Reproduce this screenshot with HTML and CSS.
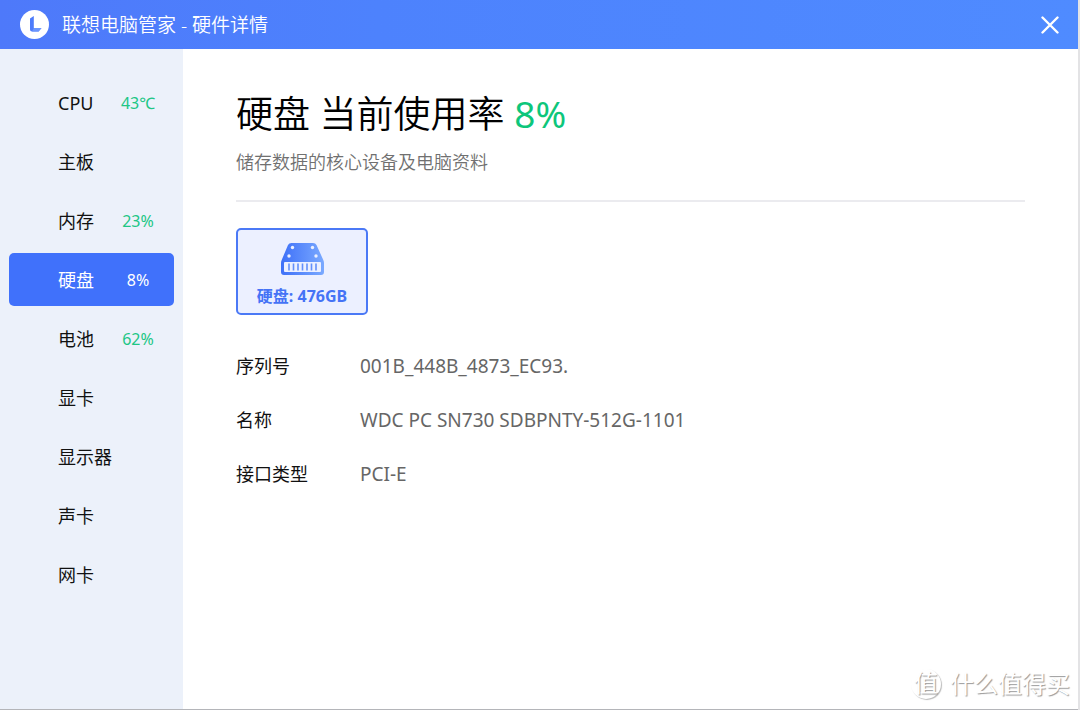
FILE: index.html
```html
<!DOCTYPE html>
<html lang="zh-CN">
<head>
<meta charset="utf-8">
<title>联想电脑管家 - 硬件详情</title>
<link rel="stylesheet" href="styles.css">
</head>
<body>
<div class="window">
  <header class="titlebar">
    <svg class="logo" viewBox="0 0 30 30" aria-hidden="true">
      <circle cx="14.5" cy="14.5" r="14.5" fill="#fff"/>
      <path d="M10 8.500 L13.800 6 V18 H21.500 L18.600 21.500 H12 Q10 21.500 10 19.500 Z" fill="#4d7bfb"/>
      <path d="M13.800 18 H21.500 L18.600 21.500 H12 Z" fill="#6c96fd"/>
    </svg>
    <h1 class="app-title">联想电脑管家 - 硬件详情</h1>
    <button class="close" type="button" aria-label="关闭">
      <svg viewBox="0 0 18 18" aria-hidden="true"><path d="M1.5 1.5 L16.5 16.5 M16.5 1.5 L1.5 16.5" stroke="#fff" stroke-width="2.4" stroke-linecap="round"/></svg>
    </button>
  </header>
  <div class="body">
    <nav class="sidebar">
      <a class="item" href="#cpu"><span>CPU</span><span class="usage">43℃</span></a>
      <a class="item" href="#board"><span>主板</span></a>
      <a class="item" href="#memory"><span>内存</span><span class="usage">23%</span></a>
      <a class="item active" href="#disk" aria-current="page"><span>硬盘</span><span class="usage">8%</span></a>
      <a class="item" href="#battery"><span>电池</span><span class="usage">62%</span></a>
      <a class="item" href="#gpu"><span>显卡</span></a>
      <a class="item" href="#display"><span>显示器</span></a>
      <a class="item" href="#sound"><span>声卡</span></a>
      <a class="item" href="#network"><span>网卡</span></a>
    </nav>
    <main class="content">
      <h2 class="heading">硬盘 当前使用率 <span class="rate">8%</span></h2>
      <p class="subtitle">储存数据的核心设备及电脑资料</p>
      <button class="disk" type="button">
        <svg class="disk-icon" viewBox="0 0 43 32" aria-hidden="true">
          <defs><linearGradient id="metal" x1="0" y1="0" x2="1" y2="0"><stop offset="0" stop-color="#3e70f8"/><stop offset="1" stop-color="#7aa9ff"/></linearGradient></defs>
          <path d="M10.5 0 H32 Q34.5 0 35.5 2 L42.3 17 Q43 18.5 43 20 V29 Q43 32 40 32 H3 Q0 32 0 29 V20 Q0 18.5 .7 17 L7 2 Q8 0 10.5 0 Z" fill="url(#metal)"/>
          <rect x="3" y="19" width="37" height="10" rx="1" fill="#ecf0ff"/>
          <g fill="#ecf0ff"><circle cx="11.5" cy="4.5" r="1.7"/><circle cx="31.5" cy="4.5" r="1.7"/><circle cx="8" cy="13" r="1.7"/><circle cx="35" cy="13" r="1.7"/></g>
          <path d="M8 20.5 V27.5 M12.5 20.5 V27.5 M17 20.5 V27.5 M21.5 20.5 V27.5 M26 20.5 V27.5 M30.5 20.5 V27.5 M35 20.5 V27.5" stroke="#6390fb" stroke-width="1.6" fill="none"/>
        </svg>
        <span>硬盘: 476GB</span>
      </button>
      <dl class="details">
        <dt>序列号</dt><dd>001B_448B_4873_EC93.</dd>
        <dt>名称</dt><dd>WDC PC SN730 SDBPNTY-512G-1101</dd>
        <dt>接口类型</dt><dd>PCI-E</dd>
      </dl>
    </main>
  </div>
  <div class="watermark"><span class="seal">值</span><span>什么值得买</span></div>
</div>
</body>
</html>
```
FILE: styles.css
```css
* { box-sizing: border-box; }
body {
  margin: 0;
  background: #e3e3e5;
  color: #111;
  font-family: "Noto Sans", "Noto Sans CJK SC", sans-serif;
  font-size: 18px;
  line-height: 26px;
}
h1, h2, p, dl, dd { margin: 0; font-weight: 400; }
button { border: 0; padding: 0; background: none; font: inherit; cursor: pointer; }
.window {
  position: relative;
  display: flex;
  flex-direction: column;
  min-height: 100vh;
  margin-right: 2px;
  border-bottom: 1px solid #b4b5b9;
  background: #fff;
}
.titlebar {
  display: flex;
  align-items: center;
  height: 49px;
  padding: 0 19px 0 20px;
  background: linear-gradient(90deg, #4e79fa, #4d82fd 35%, #4f8bff);
  color: #fff;
}
.logo { width: 30px; height: 30px; }
.app-title { margin-left: 12px; font-size: 19px; font-weight: 350; }
.close { display: flex; margin-left: auto; }
.close svg { width: 18px; height: 18px; }
.body { display: flex; flex: 1; }
.sidebar {
  display: flex;
  flex-direction: column;
  gap: 6px;
  width: 183px;
  padding: 27px 9px;
  background: #ecf1fa;
}
.item {
  display: grid;
  grid-template-columns: 1fr 72px;
  align-items: center;
  height: 53px;
  padding-left: 49px;
  border-radius: 5px;
  color: #111;
  text-decoration: none;
  white-space: nowrap;
}
.usage { color: #20c685; font-size: 16px; text-align: center; }
.active { background: #4071fb; color: #fff; }
.active .usage { color: #fff; }
.content { flex: 1; padding: 38px 53px 38px; }
.heading { color: #000; font-size: 37px; font-weight: 350; line-height: 54px; }
.rate { color: #0dc67b; font-weight: 400; }
.subtitle {
  padding: 8px 0 25px;
  border-bottom: 2px solid #ebebef;
  color: #707070;
  font-weight: 350;
}
.disk {
  display: flex;
  flex-direction: column;
  align-items: center;
  gap: 9px;
  width: 132px;
  height: 87px;
  margin-top: 26px;
  padding-top: 13px;
  border: 2px solid #4b79f6;
  border-radius: 5px;
  background: #ecf0ff;
  color: #4573f6;
  font-size: 16px;
  font-weight: 700;
  line-height: 24px;
}
.disk-icon { width: 43px; height: 32px; }
.details {
  display: grid;
  grid-template-columns: 124px 1fr;
  row-gap: 28px;
  margin-top: 38px;
}
.details dd { color: #666; font-size: 19px; }
.watermark {
  position: absolute;
  right: 8px;
  bottom: 8px;
  display: flex;
  align-items: center;
  gap: 9px;
  color: #fff;
  font-size: 24px;
  line-height: 34px;
  text-shadow: 1px 1px 1px #999;
}
.seal {
  width: 30px;
  height: 30px;
  border-radius: 50%;
  box-shadow: 1px 1px 1px #bbb;
  line-height: 28px;
  text-align: center;
}
```
